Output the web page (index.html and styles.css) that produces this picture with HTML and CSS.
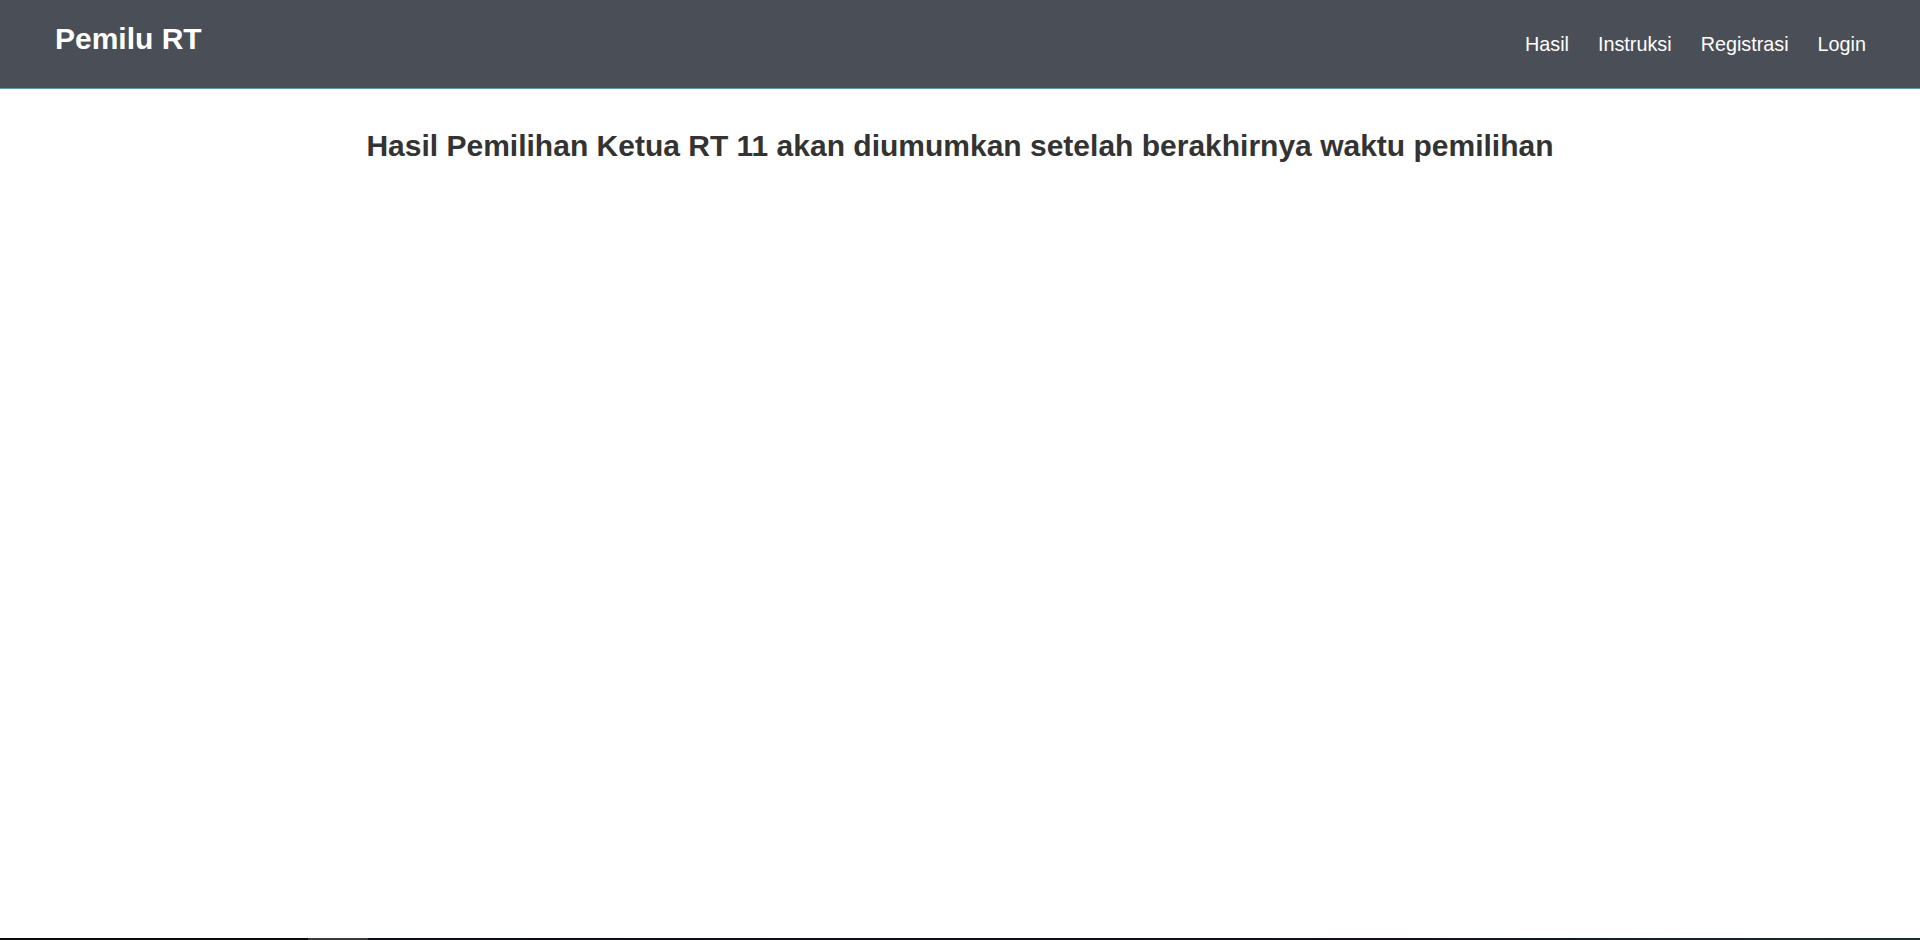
FILE: index.html
```html
<!DOCTYPE html>
<html lang="id">
<head>
<meta charset="utf-8">
<title>Pemilu RT</title>
<link rel="stylesheet" href="styles.css">
</head>
<body>
<header class="navbar">
  <a class="brand" href="#">Pemilu RT</a>
  <nav class="nav-links">
    <a href="#">Hasil</a>
    <a href="#">Instruksi</a>
    <a href="#">Registrasi</a>
    <a href="#">Login</a>
  </nav>
</header>
<main class="content">
  <h2 class="title">Hasil Pemilihan Ketua RT 11 akan diumumkan setelah berakhirnya waktu pemilihan</h2>
</main>
<div class="bottom-strip"></div>
</body>
</html>
```
FILE: styles.css
```css
html, body {
  margin: 0;
  padding: 0;
}
body {
  font-family: "Liberation Sans", Arial, sans-serif;
  background: #ffffff;
  color: #333333;
  min-height: 100vh;
  display: flex;
  flex-direction: column;
}
.navbar {
  height: 89px;
  box-sizing: border-box;
  background: #4a4e56;
  border-bottom: 1px solid #3ba6c2;
  display: flex;
  justify-content: space-between;
  align-items: flex-start;
  padding: 0 54px 0 55px;
  flex-shrink: 0;
}
.brand {
  color: #ffffff;
  text-decoration: none;
  font-weight: bold;
  font-size: 30px;
  line-height: 34px;
  margin-top: 21.5px;
}
.nav-links {
  display: flex;
  gap: 29px;
  margin-top: 32.5px;
}
.nav-links a {
  color: #ffffff;
  text-decoration: none;
  font-size: 19.8px;
  line-height: 23px;
}
.content {
  flex: 1;
  padding-top: 40px;
}
.title {
  margin: 0;
  text-align: center;
  font-size: 30px;
  line-height: 33px;
  font-weight: bold;
  color: #333333;
}
.bottom-strip {
  height: 2px;
  flex-shrink: 0;
  background: linear-gradient(to right, #0a0a0c 0, #0a0a0c 308px, #3a3a3c 308px, #3a3a3c 368px, #0c0c16 368px, #14101e 1400px, #18302c 1920px);
}
```
